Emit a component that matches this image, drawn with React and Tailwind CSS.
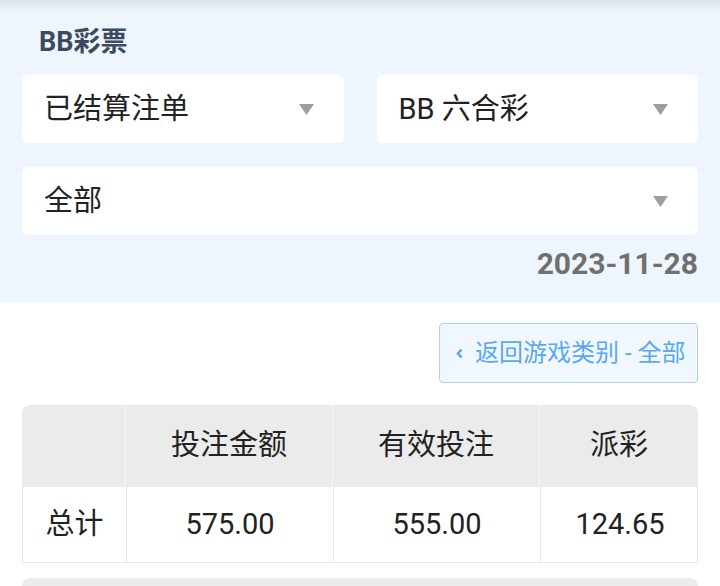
import React from "react";

const FONT = { fontFamily: "Roboto, 'Noto Sans CJK SC', sans-serif" };

function Caret() {
  return (
    <svg width="15" height="11" viewBox="0 0 15 11" className="shrink-0">
      <path d="M0 0 H15 L7.5 11 Z" fill="#9e9e9e" />
    </svg>
  );
}

function Select({ label, className = "" }) {
  return (
    <div className={`h-[68px] bg-white rounded-[6px] flex items-center justify-between pl-[22px] pr-[30px] ${className}`}>
      <span className="text-[29px] leading-none text-[#222]">{label}</span>
      <Caret />
    </div>
  );
}

export default function App() {
  const head = ["", "投注金额", "有效投注", "派彩"];
  const row = ["总计", "575.00", "555.00", "124.65"];
  const cols = "grid grid-cols-[103px_207px_207px_159px]";

  return (
    <div className="w-[720px] h-[586px] overflow-hidden bg-white" style={FONT}>
      {/* Filters */}
      <div className="relative bg-[#eef5fd] px-[22px] pt-[25px] pb-[22px]">
        <div className="absolute inset-x-0 top-0 h-[12px] bg-gradient-to-b from-[#dfe3e8] to-transparent" />
        <h1 className="pl-[17px] text-[27px] leading-[34px] font-bold text-[#3b4a5e]">BB彩票</h1>
        <div className="mt-[16px] flex gap-[33px]">
          <Select label="已结算注单" className="flex-1" />
          <Select label="BB 六合彩" className="flex-1" />
        </div>
        <Select label="全部" className="mt-[24px]" />
        <div className="mt-[12px] text-right text-[30px] leading-[33px] font-bold text-[#707070]">2023-11-28</div>
      </div>

      {/* Results */}
      <div className="px-[22px]">
        <div className="flex justify-end mt-[21px]">
          <button className="h-[60px] w-[259px] flex items-center pl-[16px] gap-[12px] bg-[#f0f7ff] border border-[#a9d3f7] rounded-[4px] text-[24px] text-[#5aa9ee]">
            <svg width="7" height="11" viewBox="0 0 7 11">
              <path d="M5.5 1.5 L2 5.5 L5.5 9.5" fill="none" stroke="#5aa9ee" strokeWidth="2.6" />
            </svg>
            <span className="leading-none">返回游戏类别 - 全部</span>
          </button>
        </div>

        <div className="mt-[22px] rounded-t-[8px] overflow-hidden">
          <div className={`${cols} h-[82px] bg-[#ebebeb]`}>
            {head.map((h, i) => (
              <div key={i} className={`flex items-center justify-center text-[29px] text-[#222] ${i > 0 ? "border-l border-[#f8f8f8]" : ""}`}>
                {h}
              </div>
            ))}
          </div>
          <div className={`${cols} h-[76px] border border-t-0 border-[#e8e8e8]`}>
            {row.map((v, i) => (
              <div key={i} className={`flex items-center justify-center text-[29px] text-[#222] ${i > 0 ? "border-l border-[#e8e8e8]" : ""}`}>
                {v}
              </div>
            ))}
          </div>
        </div>

        <div className="mt-[15px] h-[20px] rounded-t-[8px] bg-[#ebebeb]" />
      </div>
    </div>
  );
}
